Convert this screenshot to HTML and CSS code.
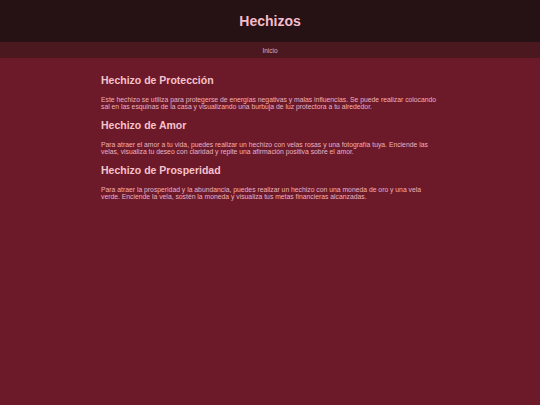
FILE: index.html
```html
<!DOCTYPE html>
<html lang="es">
<head>
<meta charset="utf-8">
<title>Hechizos</title>
<link rel="stylesheet" href="styles.css">
</head>
<body>
<header class="site-header">
  <h1 class="site-title">Hechizos</h1>
</header>
<nav class="site-nav">
  <a class="nav-link" href="#">Inicio</a>
</nav>
<main class="content">
  <section class="spell">
    <h2 class="spell-title">Hechizo de Protección</h2>
    <p class="spell-text">Este hechizo se utiliza para protegerse de energías negativas y malas influencias. Se puede realizar colocando sal en las esquinas de la casa y visualizando una burbuja de luz protectora a tu alrededor.</p>
  </section>
  <section class="spell">
    <h2 class="spell-title">Hechizo de Amor</h2>
    <p class="spell-text">Para atraer el amor a tu vida, puedes realizar un hechizo con velas rosas y una fotografía tuya. Enciende las velas, visualiza tu deseo con claridad y repite una afirmación positiva sobre el amor.</p>
  </section>
  <section class="spell">
    <h2 class="spell-title">Hechizo de Prosperidad</h2>
    <p class="spell-text">Para atraer la prosperidad y la abundancia, puedes realizar un hechizo con una moneda de oro y una vela verde. Enciende la vela, sostén la moneda y visualiza tus metas financieras alcanzadas.</p>
  </section>
</main>
</body>
</html>
```
FILE: styles.css
```css
html, body {
  margin: 0;
  padding: 0;
}
body {
  background: #6c1a29;
  font-family: "Liberation Sans", Arial, sans-serif;
  color: #f2b8c4;
  min-height: 405px;
}
.site-header {
  background: #261114;
  height: 42px;
  display: flex;
  align-items: center;
  justify-content: center;
}
.site-title {
  margin: 0;
  font-size: 14px;
  font-weight: bold;
  color: #f5bccb;
}
.site-nav {
  background: #4c1820;
  height: 16px;
  display: flex;
  align-items: center;
  justify-content: center;
}
.nav-link {
  font-size: 6.5px;
  color: #e3a9b8;
  text-decoration: none;
}
.content {
  width: 338px;
  margin: 0 auto;
  padding-top: 16px;
}
.spell-title {
  margin: 0;
  font-size: 10.5px;
  font-weight: bold;
  color: #f5c2cc;
  line-height: 13px;
}
.spell-text {
  margin: 9px 0 9px;
  font-size: 6.8px;
  line-height: 7px;
  color: #eeb0bf;
}
```
